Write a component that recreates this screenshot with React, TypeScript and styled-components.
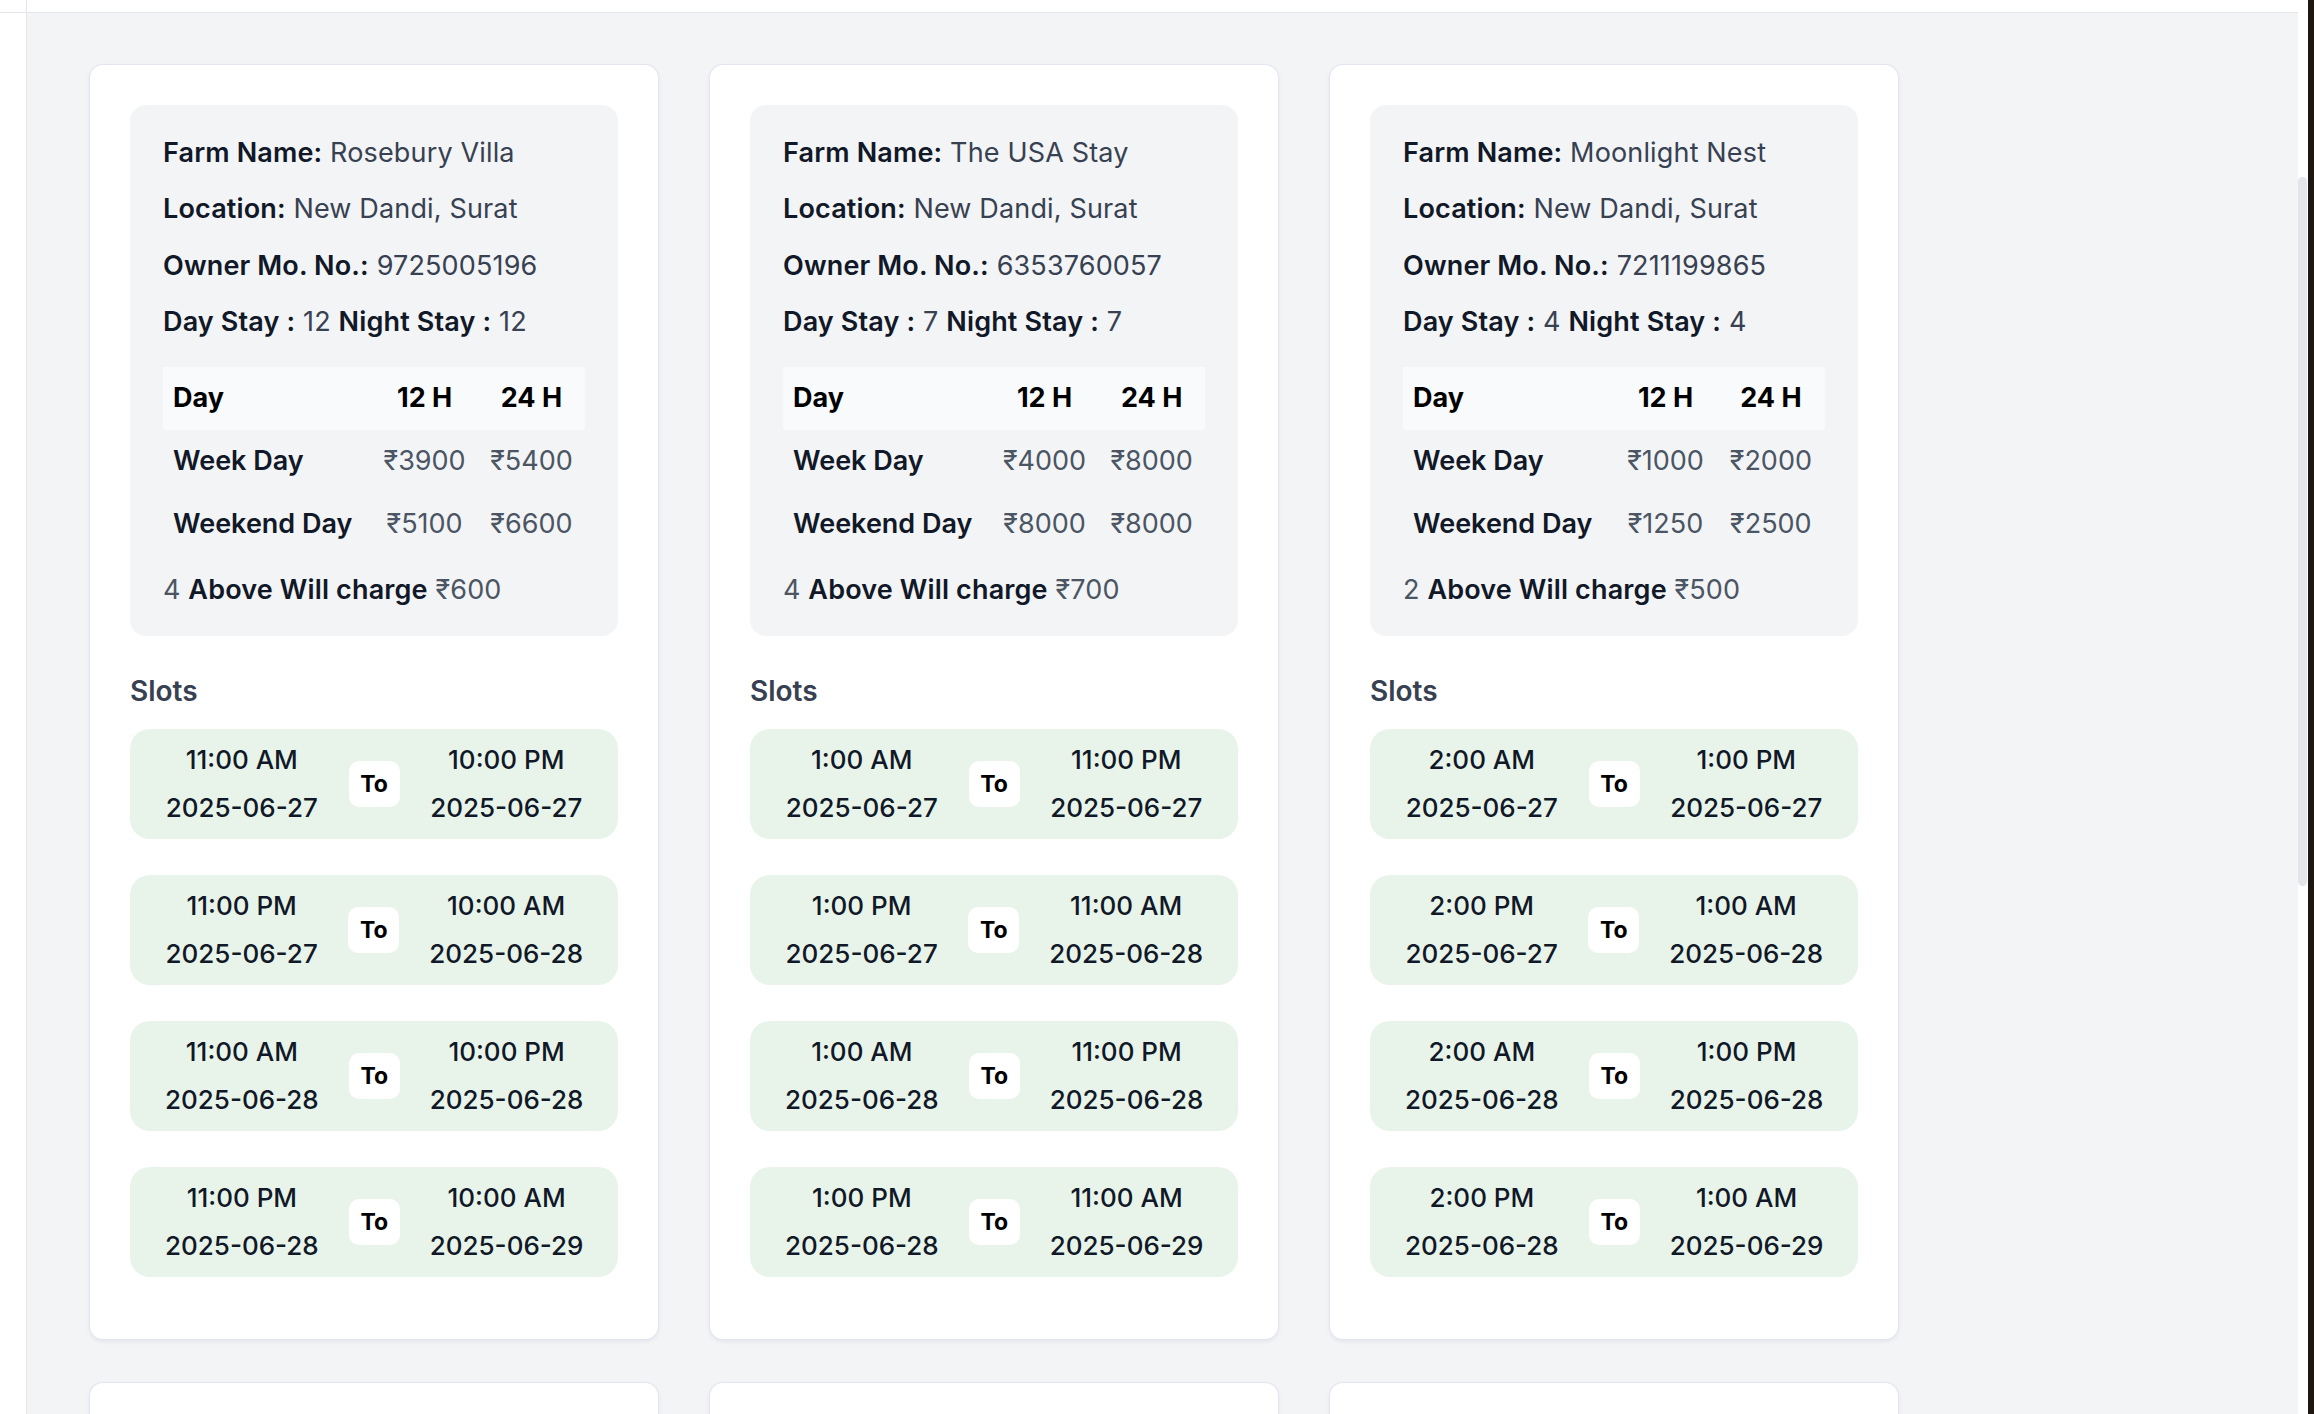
import React from "react";
import styled, { createGlobalStyle } from "styled-components";

const GlobalStyle = createGlobalStyle`
  html, body { margin: 0; padding: 0; height: 100%; overflow: hidden; }
  body { font-family: Inter, "Noto Sans", "Liberation Sans", sans-serif; background: #ffffff; }
  #root { height: 100%; }
  *, *::before, *::after { box-sizing: border-box; }
`;

type Slot = { fromTime: string; fromDate: string; toTime: string; toDate: string };
type Farm = {
  name: string;
  location: string;
  phone: string;
  dayStay: number;
  nightStay: number;
  week: [string, string];
  weekend: [string, string];
  above: number;
  charge: string;
  slots: Slot[];
};

const mk = (a: string, b: string, c: string, d: string, e: string, f: string, g: string, h: string): Slot[] => [
  { fromTime: a, fromDate: "2025-06-27", toTime: b, toDate: "2025-06-27" },
  { fromTime: c, fromDate: "2025-06-27", toTime: d, toDate: "2025-06-28" },
  { fromTime: e, fromDate: "2025-06-28", toTime: f, toDate: "2025-06-28" },
  { fromTime: g, fromDate: "2025-06-28", toTime: h, toDate: "2025-06-29" },
];

const farms: Farm[] = [
  {
    name: "Rosebury Villa",
    location: "New Dandi, Surat",
    phone: "9725005196",
    dayStay: 12,
    nightStay: 12,
    week: ["₹3900", "₹5400"],
    weekend: ["₹5100", "₹6600"],
    above: 4,
    charge: "₹600",
    slots: mk("11:00 AM", "10:00 PM", "11:00 PM", "10:00 AM", "11:00 AM", "10:00 PM", "11:00 PM", "10:00 AM"),
  },
  {
    name: "The USA Stay",
    location: "New Dandi, Surat",
    phone: "6353760057",
    dayStay: 7,
    nightStay: 7,
    week: ["₹4000", "₹8000"],
    weekend: ["₹8000", "₹8000"],
    above: 4,
    charge: "₹700",
    slots: mk("1:00 AM", "11:00 PM", "1:00 PM", "11:00 AM", "1:00 AM", "11:00 PM", "1:00 PM", "11:00 AM"),
  },
  {
    name: "Moonlight Nest",
    location: "New Dandi, Surat",
    phone: "7211199865",
    dayStay: 4,
    nightStay: 4,
    week: ["₹1000", "₹2000"],
    weekend: ["₹1250", "₹2500"],
    above: 2,
    charge: "₹500",
    slots: mk("2:00 AM", "1:00 PM", "2:00 PM", "1:00 AM", "2:00 AM", "1:00 PM", "2:00 PM", "1:00 AM"),
  },
  {
    name: "Green Acres",
    location: "Dumas, Surat",
    phone: "9898012345",
    dayStay: 10,
    nightStay: 10,
    week: ["₹3000", "₹5000"],
    weekend: ["₹4000", "₹6000"],
    above: 4,
    charge: "₹500",
    slots: mk("9:00 AM", "8:00 PM", "9:00 PM", "8:00 AM", "9:00 AM", "8:00 PM", "9:00 PM", "8:00 AM"),
  },
  {
    name: "Palm Retreat",
    location: "New Dandi, Surat",
    phone: "9427011122",
    dayStay: 8,
    nightStay: 8,
    week: ["₹3500", "₹6000"],
    weekend: ["₹4500", "₹7000"],
    above: 4,
    charge: "₹600",
    slots: mk("10:00 AM", "9:00 PM", "10:00 PM", "9:00 AM", "10:00 AM", "9:00 PM", "10:00 PM", "9:00 AM"),
  },
  {
    name: "Sunset Farm",
    location: "Dumas, Surat",
    phone: "9825033344",
    dayStay: 6,
    nightStay: 6,
    week: ["₹2500", "₹4500"],
    weekend: ["₹3500", "₹5500"],
    above: 3,
    charge: "₹400",
    slots: mk("8:00 AM", "7:00 PM", "8:00 PM", "7:00 AM", "8:00 AM", "7:00 PM", "8:00 PM", "7:00 AM"),
  },
];

const Shell = styled.div`
  display: flex;
  width: 100vw;
  height: 100vh;
  overflow: hidden;
  background: #ffffff;
`;

const Rail = styled.aside`
  flex: none;
  width: 27px;
  display: flex;
  flex-direction: column;
  background: #ffffff;
  border-right: 1px solid #e3e5ea;
`;

const TopStrip = styled.div`
  flex: none;
  height: 13px;
  background: #ffffff;
  border-bottom: 1px solid #e3e5ea;
`;

const Main = styled.main`
  flex: 1;
  min-width: 0;
  display: flex;
  flex-direction: column;
`;

const Content = styled.div`
  flex: 1;
  min-height: 0;
  overflow: hidden;
  background: #f3f4f6;
  padding: 52px 63px 0;
`;

const Grid = styled.div`
  display: grid;
  grid-template-columns: repeat(3, 568px);
  column-gap: 52px;
  row-gap: 44px;
  align-items: start;
`;

const Card = styled.section`
  background: #ffffff;
  border-radius: 13px;
  padding: 40px 40px 62px;
  box-shadow: 0 0 0 1px #e4e5f0, 0 2px 5px rgba(70, 72, 110, 0.1);
`;

const InfoBox = styled.div`
  background: #f3f4f6;
  border-radius: 16px;
  padding: 29.5px 33px 28px;
`;

const InfoLines = styled.div`
  display: flex;
  flex-direction: column;
  gap: 20.6px;
`;

const Line = styled.div`
  font-size: 27px;
  line-height: 36px;
  letter-spacing: 0.15px;
  color: #374151;
  white-space: nowrap;
`;

const Label = styled.span`
  font-weight: 600;
  color: #111827;
`;

const PriceTable = styled.table`
  width: 100%;
  margin-top: 26.5px;
  border-collapse: collapse;
  font-size: 27px;
  line-height: 36px;
`;

const HeadCell = styled.th<{ $first?: boolean }>`
  height: 63px;
  padding: 0 10px;
  background: #f9fafb;
  color: #000000;
  font-weight: 700;
  text-align: ${(p) => (p.$first ? "left" : "center")};
  white-space: nowrap;
`;

const RowLabel = styled.td`
  height: 63px;
  padding: 0 10px;
  color: #111827;
  font-weight: 600;
  text-align: left;
  white-space: nowrap;
`;

const Price = styled.td`
  height: 63px;
  padding: 0 10px;
  color: #4b5563;
  text-align: center;
  white-space: nowrap;
`;

const ChargeLine = styled(Line)`
  margin-top: 16.3px;
  color: #4b5563;
`;

const SlotsTitle = styled.h3`
  margin: 36.5px 0 20.5px;
  font-size: 28px;
  line-height: 36px;
  font-weight: 600;
  color: #374151;
`;

const SlotList = styled.div`
  display: flex;
  flex-direction: column;
  gap: 36px;
`;

const SlotRow = styled.div`
  height: 110px;
  display: grid;
  grid-template-columns: 1fr auto 1fr;
  column-gap: 30px;
  align-items: center;
  padding: 0 35px;
  background: #e8f4ea;
  border-radius: 20px;
`;

const SlotEnd = styled.div`
  display: flex;
  flex-direction: column;
  align-items: center;
  gap: 12px;
  font-size: 26px;
  line-height: 36px;
  font-weight: 500;
  color: #111827;
  white-space: nowrap;
`;

const ToBadge = styled.div`
  width: 51px;
  height: 46px;
  display: flex;
  align-items: center;
  justify-content: center;
  background: #ffffff;
  border-radius: 10px;
  font-size: 23px;
  font-weight: 700;
  color: #000000;
`;

const ScrollTrack = styled.div`
  flex: none;
  width: 10px;
  background: #ffffff;
  padding-top: 177px;
`;

const ScrollThumb = styled.div`
  width: 9px;
  height: 709px;
  background: #e4e5ea;
  border-radius: 5px;
`;

const DarkEdge = styled.div`
  flex: none;
  width: 6px;
  background: #1c1712;
`;

function FarmCard({ farm }: { farm: Farm }) {
  return (
    <Card>
      <InfoBox>
        <InfoLines>
          <Line>
            <Label>Farm Name:</Label> {farm.name}
          </Line>
          <Line>
            <Label>Location:</Label> {farm.location}
          </Line>
          <Line>
            <Label>Owner Mo. No.:</Label> {farm.phone}
          </Line>
          <Line>
            <Label>Day Stay :</Label> {farm.dayStay} <Label>Night Stay :</Label> {farm.nightStay}
          </Line>
        </InfoLines>
        <PriceTable>
          <thead>
            <tr>
              <HeadCell $first>Day</HeadCell>
              <HeadCell>12 H</HeadCell>
              <HeadCell>24 H</HeadCell>
            </tr>
          </thead>
          <tbody>
            <tr>
              <RowLabel>Week Day</RowLabel>
              <Price>{farm.week[0]}</Price>
              <Price>{farm.week[1]}</Price>
            </tr>
            <tr>
              <RowLabel>Weekend Day</RowLabel>
              <Price>{farm.weekend[0]}</Price>
              <Price>{farm.weekend[1]}</Price>
            </tr>
          </tbody>
        </PriceTable>
        <ChargeLine>
          {farm.above} <Label>Above Will charge</Label> {farm.charge}
        </ChargeLine>
      </InfoBox>
      <SlotsTitle>Slots</SlotsTitle>
      <SlotList>
        {farm.slots.map((s, i) => (
          <SlotRow key={i}>
            <SlotEnd>
              <span>{s.fromTime}</span>
              <span>{s.fromDate}</span>
            </SlotEnd>
            <ToBadge>To</ToBadge>
            <SlotEnd>
              <span>{s.toTime}</span>
              <span>{s.toDate}</span>
            </SlotEnd>
          </SlotRow>
        ))}
      </SlotList>
    </Card>
  );
}

export default function App() {
  return (
    <>
      <GlobalStyle />
      <Shell>
        <Rail>
          <TopStrip />
        </Rail>
        <Main>
          <TopStrip />
          <Content>
            <Grid>
              {farms.map((f) => (
                <FarmCard key={f.name} farm={f} />
              ))}
            </Grid>
          </Content>
        </Main>
        <ScrollTrack>
          <ScrollThumb />
        </ScrollTrack>
        <DarkEdge />
      </Shell>
    </>
  );
}
